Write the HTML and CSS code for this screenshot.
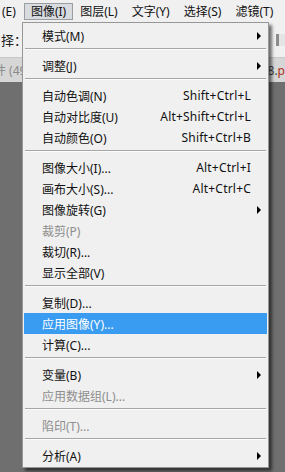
FILE: index.html
```html
<!DOCTYPE html>
<html lang="zh-CN">
<head>
    <meta charset="UTF-8">
    <meta name="viewport" content="width=device-width, initial-scale=1.0">
    <title>图像菜单</title>
    <link rel="stylesheet" href="styles.css">
</head>
<body>
    <nav class="menubar">
        <span class="top first">(E)</span>
        <span class="top open">图像(I)</span>
        <span class="top">图层(L)</span>
        <span class="top">文字(Y)</span>
        <span class="top">选择(S)</span>
        <span class="top">滤镜(T)</span>
    </nav>

    <div class="workspace">
        <div class="options">
            <span class="opt-label">择：</span>
            <span class="opt-icon"></span>
        </div>
        <div class="tabs">
            <span class="tab-left">件 (49</span>
            <span class="tab-right">]8.<b>p</b></span>
        </div>
        <div class="canvas"></div>

        <!-- dropdown for 图像(I) -->
        <div class="menu">
            <div class="item"><span>模式(M)</span><span></span><i class="arrow"></i></div>
            <div class="sep"></div>
            <div class="item"><span>调整(J)</span><span></span><i class="arrow"></i></div>
            <div class="sep"></div>
            <div class="item"><span>自动色调(N)</span><span class="key">Shift+Ctrl+L</span><i></i></div>
            <div class="item"><span>自动对比度(U)</span><span class="key">Alt+Shift+Ctrl+L</span><i></i></div>
            <div class="item"><span>自动颜色(O)</span><span class="key">Shift+Ctrl+B</span><i></i></div>
            <div class="sep"></div>
            <div class="item"><span>图像大小(I)...</span><span class="key">Alt+Ctrl+I</span><i></i></div>
            <div class="item"><span>画布大小(S)...</span><span class="key">Alt+Ctrl+C</span><i></i></div>
            <div class="item"><span>图像旋转(G)</span><span></span><i class="arrow"></i></div>
            <div class="item off"><span>裁剪(P)</span><span></span><i></i></div>
            <div class="item"><span>裁切(R)...</span><span></span><i></i></div>
            <div class="item"><span>显示全部(V)</span><span></span><i></i></div>
            <div class="sep"></div>
            <div class="item"><span>复制(D)...</span><span></span><i></i></div>
            <div class="item active"><span>应用图像(Y)...</span><span></span><i></i></div>
            <div class="item"><span>计算(C)...</span><span></span><i></i></div>
            <div class="sep"></div>
            <div class="item"><span>变量(B)</span><span></span><i class="arrow"></i></div>
            <div class="item off"><span>应用数据组(L)...</span><span></span><i></i></div>
            <div class="sep"></div>
            <div class="item off"><span>陷印(T)...</span><span></span><i></i></div>
            <div class="sep"></div>
            <div class="item"><span>分析(A)</span><span></span><i class="arrow"></i></div>
        </div>
    </div>
</body>
</html>
```

FILE: styles.css
```css
* {
    margin: 0;
    padding: 0;
    box-sizing: border-box;
}

body {
    width: 285px;
    height: 472px;
    overflow: hidden;
    background: #6f6f6f;
    font-family: "Noto Sans", "Noto Sans CJK SC", sans-serif;
    font-size: 12px;
    color: #111;
}

.menubar {
    height: 22px;
    display: flex;
    align-items: center;
    background: #f0f0f0;
    white-space: nowrap;
}

.top {
    height: 17px;
    line-height: 16px;
    padding: 0 6px;
    border: 1px solid transparent;
}

.top.first {
    padding: 0 0 0 1px;
    margin-right: 7px;
}

.top.open {
    background: #d8dce1;
    border-color: #9a9ea3;
}

.workspace {
    position: relative;
    height: 450px;
}

.options {
    height: 36px;
    background: #f0f0f0;
    border-bottom: 1px solid #c8c8c8;
    display: flex;
    align-items: center;
    justify-content: space-between;
}

.opt-label {
    padding-left: 1px;
    font-size: 13px;
    color: #222;
}

.opt-icon {
    width: 9px;
    height: 12px;
    border-left: 3px solid #8c8c8c;
    background: #e4e4e4;
}

.tabs {
    height: 24px;
    display: flex;
    justify-content: space-between;
    align-items: center;
    background: #d6d6d6;
    white-space: nowrap;
    overflow: hidden;
}

.tab-left {
    margin-left: -6px;
    color: #8a8a8a;
}

.tab-right {
    color: #444;
}

.tab-right b {
    font-weight: normal;
    color: #b03020;
}

.canvas {
    height: 390px;
    background: #6f6f6f;
}

.menu {
    position: absolute;
    left: 22px;
    top: 0;
    width: 247px;
    padding: 2px 1px 1px;
    background: #f0f0f0;
    border: 1px solid #979797;
    box-shadow: 3px 3px 3px rgba(0, 0, 0, 0.55);
}

.item {
    height: 21px;
    display: grid;
    grid-template-columns: 1fr auto 16px;
    align-items: center;
    padding-left: 18px;
    white-space: nowrap;
}

.item.off {
    color: #8e8e8e;
}

.item.active {
    background: #3a9cf0;
    color: #fff;
}

.key {
    letter-spacing: 0.2px;
}

.arrow {
    justify-self: start;
    margin-left: 6px;
    width: 0;
    height: 0;
    border-top: 4px solid transparent;
    border-bottom: 4px solid transparent;
    border-left: 4px solid #000;
}

.sep {
    height: 9px;
    margin: 0 1px;
    padding-top: 2px;
}

.sep::before {
    content: "";
    display: block;
    border-top: 1px solid #a6a6a6;
    border-bottom: 1px solid #fbfbfb;
}
```
